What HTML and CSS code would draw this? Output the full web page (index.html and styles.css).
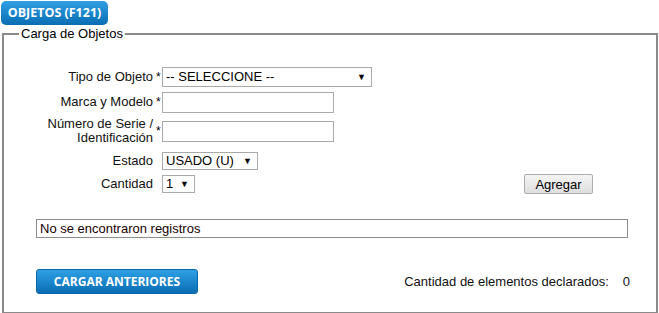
FILE: index.html
```html
<!DOCTYPE html>
<html lang="es">
<head>
    <meta charset="UTF-8">
    <meta name="viewport" content="width=device-width, initial-scale=1.0">
    <title>Objetos (F121)</title>
    <link rel="stylesheet" href="styles.css">
</head>
<body>
    <div class="page">
        <div class="tab">OBJETOS (F121)</div>

        <fieldset class="box">
            <legend>Carga de Objetos</legend>

            <div class="form-grid">
                <label class="lbl" for="tipo">Tipo de Objeto</label>
                <span class="req">*</span>
                <div class="ctl">
                    <span class="sel sel-tipo">
                        <select id="tipo">
                            <option>-- SELECCIONE --</option>
                        </select>
                        <span class="arrow">&#9660;</span>
                    </span>
                </div>

                <label class="lbl" for="marca">Marca y Modelo</label>
                <span class="req">*</span>
                <div class="ctl"><input type="text" id="marca" class="txt"></div>

                <label class="lbl" for="serie">Número de Serie /<br>Identificación</label>
                <span class="req">*</span>
                <div class="ctl"><input type="text" id="serie" class="txt"></div>

                <label class="lbl" for="estado">Estado</label>
                <span class="req"></span>
                <div class="ctl">
                    <span class="sel sel-estado">
                        <select id="estado">
                            <option>USADO (U)</option>
                            <option>NUEVO (N)</option>
                        </select>
                        <span class="arrow">&#9660;</span>
                    </span>
                </div>

                <label class="lbl" for="cantidad">Cantidad</label>
                <span class="req"></span>
                <div class="ctl ctl-last">
                    <span class="sel sel-cant">
                        <select id="cantidad">
                            <option>1</option>
                            <option>2</option>
                            <option>3</option>
                        </select>
                        <span class="arrow">&#9660;</span>
                    </span>
                    <button type="button" class="btn-gray">Agregar</button>
                </div>
            </div>

            <div class="results">No se encontraron registros</div>

            <div class="bottom">
                <button type="button" class="btn-blue">CARGAR ANTERIORES</button>
                <div class="total">
                    <span>Cantidad de elementos declarados:</span>
                    <span class="total-num">0</span>
                </div>
            </div>
        </fieldset>
    </div>
</body>
</html>
```

FILE: styles.css
```css
body {
    margin: 0;
    padding: 0;
    background: #fff;
    color: #000;
    font-family: "Liberation Sans", Arial, sans-serif;
    font-size: 13px;
}

.page {
    padding: 1px 1px 0 1px;
}

.tab {
    width: 107px;
    height: 24px;
    line-height: 24px;
    text-align: center;
    color: #fff;
    font-family: "Open Sans", sans-serif;
    font-weight: 700;
    font-size: 12.5px;
    background: linear-gradient(#2f9fe3, #0a6db4);
    border-radius: 5px;
}

.box {
    margin: 1px 0 0 1px;
    padding: 23px 0 18px 0;
    border: 2px solid #8a8a8a;
    min-height: 0;
}

.box legend {
    margin-left: 15px;
    padding: 0 2px;
    font-size: 13px;
    line-height: 15px;
}

.form-grid {
    display: grid;
    grid-template-columns: 149px 9px 1fr;
    grid-template-rows: 26px 24px 34px 26px 20px;
    align-items: center;
}

.lbl {
    text-align: right;
    line-height: 14px;
    color: #111;
}

.req {
    padding-left: 3px;
    font-size: 12px;
    line-height: 12px;
}

.ctl {
    display: flex;
    align-items: center;
}

.ctl-last {
    width: 431px;
    justify-content: space-between;
}

.txt {
    box-sizing: border-box;
    width: 172px;
    height: 21px;
    margin: 0;
    border: 1px solid #a9a9a9;
    padding: 1px 3px;
    font-family: inherit;
    font-size: 13px;
}

.sel {
    position: relative;
    display: inline-block;
}

.sel select {
    box-sizing: border-box;
    -webkit-appearance: none;
    appearance: none;
    display: block;
    margin: 0;
    border: 1px solid #a9a9a9;
    border-radius: 0;
    background: #fff;
    color: #000;
    font-family: inherit;
    font-size: 13px;
    padding: 0 0 0 3px;
    line-height: 16px;
}

.sel .arrow {
    position: absolute;
    right: 6px;
    top: 50%;
    transform: translateY(-50%);
    font-size: 9px;
    line-height: 9px;
    pointer-events: none;
}

.sel-tipo select {
    width: 210px;
    height: 20px;
}

.sel-estado select {
    width: 96px;
    height: 18px;
}

.sel-cant select {
    width: 33px;
    height: 18px;
}

.btn-gray {
    box-sizing: border-box;
    width: 69px;
    height: 20px;
    margin: 0;
    padding: 0;
    border: 1px solid #acacac;
    border-radius: 2px;
    background: linear-gradient(#f4f4f4, #dedede);
    color: #000;
    font-family: inherit;
    font-size: 13px;
}

.results {
    box-sizing: border-box;
    height: 19px;
    margin: 25px 28px 0 32px;
    padding: 0 3px;
    border: 1px solid #8c8c8c;
    line-height: 17px;
    color: #1a0000;
}

.bottom {
    display: flex;
    justify-content: space-between;
    align-items: center;
    margin: 31px 26px 0 32px;
}

.btn-blue {
    box-sizing: border-box;
    width: 162px;
    height: 25px;
    margin: 0;
    padding: 0;
    border: 1px solid #0d67a8;
    border-radius: 3px;
    background: linear-gradient(#2ea0e4, #0a6db4);
    color: #fff;
    font-family: "Open Sans", sans-serif;
    font-weight: 700;
    font-size: 12px;
}

.total {
    display: flex;
    gap: 14px;
    color: #111;
}
```
